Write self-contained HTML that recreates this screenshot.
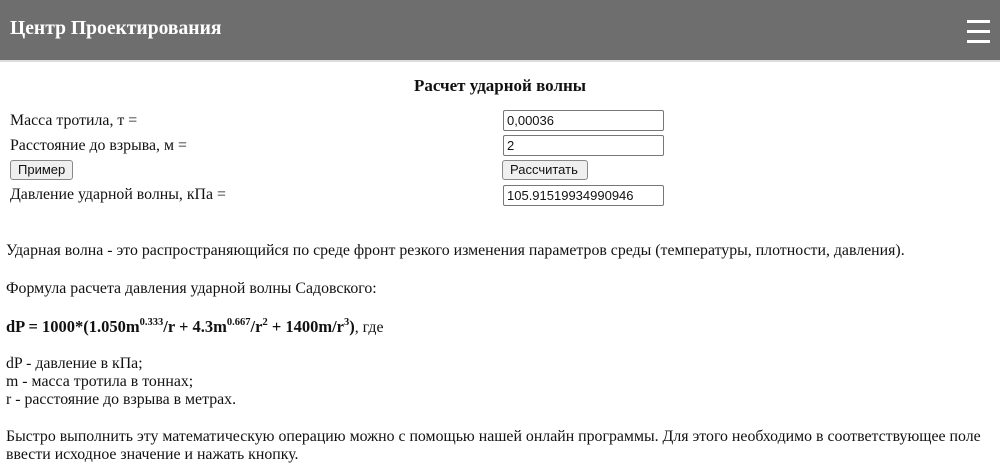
<!DOCTYPE html>
<html><head><meta charset="utf-8"><style>
body{margin:0;width:1000px;height:472px;overflow:hidden;background:#fff;font-family:"Liberation Serif",serif;font-size:15.85px;color:#111;position:relative}
.hdr{position:absolute;left:0;top:0;width:1000px;height:60px;background:#6e6e6e;border-bottom:2px solid #ddd}
.hdr .t{position:absolute;left:10px;top:18px;color:#fff;font-weight:bold;font-size:19.6px}
.bar{position:absolute;left:967px;width:23px;height:3px;background:#fff}
.a{position:absolute;white-space:nowrap}
.inp{position:absolute;left:503px;border:1px solid #777;border-radius:2px;font-family:"Liberation Sans",sans-serif;font-size:13px;line-height:19px;padding-left:3px;box-sizing:border-box;width:161px;height:21px}
.btn{position:absolute;height:20px;border:1px solid #888;border-radius:3px;background:#efefef;font-family:"Liberation Sans",sans-serif;font-size:13px;line-height:18px;box-sizing:border-box;padding:0 7px}
sup{font-size:10.5px;vertical-align:7px}
</style></head><body>
<div class="hdr"><div class="t">Центр Проектирования</div>
<div class="bar" style="top:20px"></div><div class="bar" style="top:30px"></div><div class="bar" style="top:40px"></div></div>
<div class="a" style="left:0;width:1000px;text-align:center;top:76px;font-weight:bold;font-size:17px">Расчет ударной волны</div>
<div class="a" style="left:10px;top:112px">Масса тротила, т =</div>
<div class="a" style="left:10px;top:137px">Расстояние до взрыва, м =</div>
<div class="btn" style="left:10px;top:160px">Пример</div>
<div class="a" style="left:10px;top:186px">Давление ударной волны, кПа =</div>
<div class="inp" style="top:110px">0,00036</div>
<div class="inp" style="top:135px">2</div>
<div class="btn" style="left:502px;top:160px;width:86px">Рассчитать</div>
<div class="inp" style="top:185px">105.91519934990946</div>
<div class="a" style="left:6px;top:242px">Ударная волна - это распространяющийся по среде фронт резкого изменения параметров среды (температуры, плотности, давления).</div>
<div class="a" style="left:6px;top:280px">Формула расчета давления ударной волны Садовского:</div>
<div class="a" style="left:6px;top:317px"><b style="font-size:16.5px">dP = 1000*(1.050m<sup>0.333</sup>/r + 4.3m<sup>0.667</sup>/r<sup>2</sup> + 1400m/r<sup>3</sup>)</b>, где</div>
<div class="a" style="left:6px;top:355px;line-height:18px">dP - давление в кПа;<br>m - масса тротила в тоннах;<br>r - расстояние до взрыва в метрах.</div>
<div class="a" style="left:6px;top:428px;line-height:18px">Быстро выполнить эту математическую операцию можно с помощью нашей онлайн программы. Для этого необходимо в соответствующее поле<br>ввести исходное значение и нажать кнопку.</div>
</body></html>
